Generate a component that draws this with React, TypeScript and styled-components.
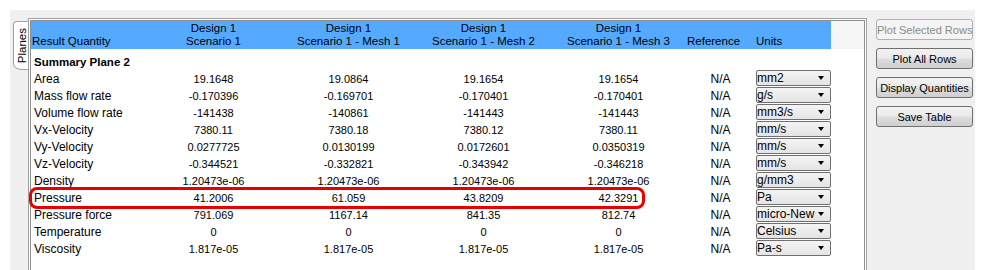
import React from 'react';
import styled, { createGlobalStyle } from 'styled-components';

const Global = createGlobalStyle`
  html, body { margin: 0; padding: 0; background: #ffffff; }
  body { font-family: "Liberation Sans", Arial, sans-serif; color: #000; }
`;

const COLS = '115px repeat(4, 135px) 69px 76px 1fr';

const Page = styled.div`
  width: 985px;
  height: 270px;
  overflow: hidden;
  padding: 10px 10px 0 10px;
  box-sizing: border-box;
  background: #ffffff;
`;

const Window = styled.div`
  height: 260px;
  background: #f0f0f0;
  display: flex;
  align-items: flex-start;
  padding: 8px 2px 0 3px;
  box-sizing: border-box;
`;

const TabStrip = styled.div`
  width: 15px;
  flex: none;
  padding-top: 3px;
`;

const Tab = styled.div`
  height: 49px;
  background: #ffffff;
  border: 1px solid #a0a0a0;
  border-right: none;
  border-radius: 4px 0 0 9px / 4px 0 0 6px;
  box-sizing: border-box;
  display: flex;
  align-items: center;
  justify-content: center;
`;

const TabLabel = styled.span`
  writing-mode: vertical-rl;
  transform: rotate(180deg);
  font-size: 11.5px;
  line-height: 12px;
  margin-left: 2px;
`;

const Pane = styled.div`
  position: relative;
  width: 839px;
  height: 262px;
  flex: none;
  border: 1px solid #a0a0a0;
  padding: 1px;
  background: #ffffff;
  box-sizing: border-box;
  display: flex;
`;

const TableFrame = styled.div`
  flex: 1;
  border: 1px solid #8e8f8f;
  background: #ffffff;
  overflow: hidden;
`;

const HeaderRow = styled.div`
  display: grid;
  grid-template-columns: ${COLS};
  height: 28px;
`;

const HeadCell = styled.div<{ $align?: string; $filler?: boolean }>`
  background: ${(p) => (p.$filler ? '#f6f6f6' : '#55aaff')};
  display: flex;
  flex-direction: column;
  justify-content: flex-end;
  align-items: ${(p) => p.$align || 'center'};
  padding: 0 0 1px ${(p) => (p.$align === 'flex-start' ? '1px' : '0')};
  font-size: 11.5px;
  line-height: 13px;
  white-space: nowrap;
`;

const Body = styled.div`
  padding-top: 4px;
`;

const SummaryRow = styled.div`
  height: 17px;
  display: flex;
  align-items: center;
  padding-left: 3px;
  font-weight: bold;
  font-size: 11.5px;
`;

const Row = styled.div`
  display: grid;
  grid-template-columns: ${COLS};
  height: 17px;
  align-items: center;
`;

const Label = styled.div`
  padding-left: 3px;
  font-size: 12px;
  white-space: nowrap;
`;

const Num = styled.div`
  text-align: center;
  font-size: 11px;
  white-space: nowrap;
`;

const Ref = styled.div`
  text-align: center;
  font-size: 12px;
`;

const UnitCell = styled.div`
  padding-left: 1px;
  align-self: start;
`;

const Select = styled.div`
  width: 75px;
  height: 16px;
  box-sizing: border-box;
  border: 1px solid #707070;
  border-radius: 2px;
  background: linear-gradient(#f4f4f4, #e4e4e4);
  display: flex;
  align-items: center;
`;

const SelectText = styled.span`
  white-space: nowrap;
  font-size: 12px;
  line-height: 14px;
`;

const Arrow = styled.span`
  margin-left: auto;
  margin-right: 6px;
  flex: none;
  width: 0;
  height: 0;
  border-left: 3.5px solid transparent;
  border-right: 3.5px solid transparent;
  border-top: 4px solid #000;
`;

const Highlight = styled.div`
  position: absolute;
  left: 0;
  top: 168px;
  width: 616px;
  height: 22px;
  box-sizing: border-box;
  border: 3px solid #e60000;
  border-radius: 8px;
  pointer-events: none;
`;

const Buttons = styled.div`
  display: flex;
  flex-direction: column;
  gap: 8px;
  margin-left: 9px;
  margin-top: 1px;
  width: 97px;
`;

const Button = styled.button<{ $disabled?: boolean }>`
  height: 21px;
  width: 97px;
  padding: 0;
  box-sizing: border-box;
  font-family: "Liberation Sans", Arial, sans-serif;
  font-size: 11px;
  white-space: nowrap;
  border-radius: 3px;
  border: 1px solid ${(p) => (p.$disabled ? '#adb2b5' : '#707070')};
  color: ${(p) => (p.$disabled ? '#8a8a8a' : '#000')};
  background: ${(p) =>
    p.$disabled
      ? '#f4f4f4'
      : 'linear-gradient(#f2f2f2 0%, #ebebeb 45%, #dddddd 55%, #cfcfcf 100%)'};
`;

type Data = { label: string; v: string[]; unit: string };

const rows: Data[] = [
  { label: 'Area', v: ['19.1648', '19.0864', '19.1654', '19.1654'], unit: 'mm2' },
  { label: 'Mass flow rate', v: ['-0.170396', '-0.169701', '-0.170401', '-0.170401'], unit: 'g/s' },
  { label: 'Volume flow rate', v: ['-141438', '-140861', '-141443', '-141443'], unit: 'mm3/s' },
  { label: 'Vx-Velocity', v: ['7380.11', '7380.18', '7380.12', '7380.11'], unit: 'mm/s' },
  { label: 'Vy-Velocity', v: ['0.0277725', '0.0130199', '0.0172601', '0.0350319'], unit: 'mm/s' },
  { label: 'Vz-Velocity', v: ['-0.344521', '-0.332821', '-0.343942', '-0.346218'], unit: 'mm/s' },
  { label: 'Density', v: ['1.20473e-06', '1.20473e-06', '1.20473e-06', '1.20473e-06'], unit: 'g/mm3' },
  { label: 'Pressure', v: ['41.2006', '61.059', '43.8209', '42.3291'], unit: 'Pa' },
  { label: 'Pressure force', v: ['791.069', '1167.14', '841.35', '812.74'], unit: 'micro-New' },
  { label: 'Temperature', v: ['0', '0', '0', '0'], unit: 'Celsius' },
  { label: 'Viscosity', v: ['1.817e-05', '1.817e-05', '1.817e-05', '1.817e-05'], unit: 'Pa-s' },
];

const scen = ['Scenario 1', 'Scenario 1 - Mesh 1', 'Scenario 1 - Mesh 2', 'Scenario 1 - Mesh 3'];

export default function App() {
  return (
    <>
      <Global />
      <Page>
        <Window>
          <TabStrip>
            <Tab>
              <TabLabel>Planes</TabLabel>
            </Tab>
          </TabStrip>
          <Pane>
            <TableFrame>
              <HeaderRow>
                <HeadCell $align="flex-start">Result Quantity</HeadCell>
                {scen.map((s) => (
                  <HeadCell key={s}>
                    <span>Design 1</span>
                    <span>{s}</span>
                  </HeadCell>
                ))}
                <HeadCell $align="flex-start">Reference</HeadCell>
                <HeadCell $align="flex-start">Units</HeadCell>
                <HeadCell $filler />
              </HeaderRow>
              <Body>
                <SummaryRow>Summary Plane 2</SummaryRow>
                {rows.map((r) => (
                  <Row key={r.label}>
                    <Label>{r.label}</Label>
                    {r.v.map((x, i) => (
                      <Num key={i}>{x}</Num>
                    ))}
                    <Ref>N/A</Ref>
                    <UnitCell>
                      <Select>
                        <SelectText>{r.unit}</SelectText>
                        <Arrow />
                      </Select>
                    </UnitCell>
                  </Row>
                ))}
              </Body>
            </TableFrame>
            <Highlight />
          </Pane>
          <Buttons>
            <Button $disabled>Plot Selected Rows</Button>
            <Button>Plot All Rows</Button>
            <Button>Display Quantities</Button>
            <Button>Save Table</Button>
          </Buttons>
        </Window>
      </Page>
    </>
  );
}
